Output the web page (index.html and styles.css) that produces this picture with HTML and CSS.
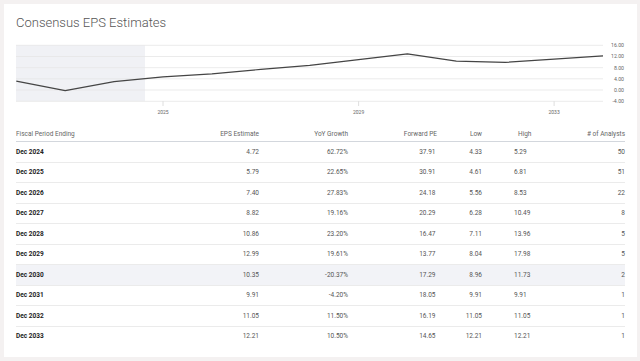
FILE: index.html
```html
<!DOCTYPE html>
<html>
<head>
<meta charset="utf-8">
<link rel="stylesheet" href="styles.css">
</head>
<body>
<div class="card">
  <h1 class="title">Consensus EPS Estimates</h1>
  <svg class="chart" width="609" height="80" viewBox="16 40 609 80">
    <rect x="16" y="45.3" width="129" height="56" fill="#f0f1f5"/>
    <g stroke="#e6e6e6" stroke-width="0.8">
      <line x1="16" y1="45.3" x2="603" y2="45.3"/>
      <line x1="16" y1="56.5" x2="603" y2="56.5"/>
      <line x1="16" y1="67.7" x2="603" y2="67.7"/>
      <line x1="16" y1="78.8" x2="603" y2="78.8"/>
      <line x1="16" y1="90" x2="603" y2="90"/>
      <line x1="16" y1="101.3" x2="603" y2="101.3"/>
    </g>
    <g stroke="#d6d6d6" stroke-width="0.8">
      <line x1="163" y1="101.3" x2="163" y2="106"/>
      <line x1="358.6" y1="101.3" x2="358.6" y2="106"/>
      <line x1="554.1" y1="101.3" x2="554.1" y2="106"/>
    </g>
    <polyline fill="none" stroke="#454545" stroke-width="1.2" stroke-linejoin="round"
      points="16.3,81.1 65.2,90.7 114.1,81.7 163,76.8 211.9,73.8 260.8,69.4 309.7,65.4 358.6,59.7 407.4,53.8 456.3,61.1 505.2,62.4 554.1,59.2 603,55.9"/>
    <g class="ylab">
      <text x="624" y="47.1">16.00</text>
      <text x="624" y="58.3">12.00</text>
      <text x="624" y="69.5">8.00</text>
      <text x="624" y="80.6">4.00</text>
      <text x="624" y="91.8">0.00</text>
      <text x="624" y="103.1">-4.00</text>
    </g>
    <g class="xlab">
      <text x="163" y="114">2025</text>
      <text x="358.6" y="114">2029</text>
      <text x="554.1" y="114">2033</text>
    </g>
  </svg>
  <table class="est">
    <colgroup>
      <col class="c1"><col class="c2"><col class="c3"><col class="c4"><col class="c5"><col class="c6"><col class="c7">
    </colgroup>
    <thead>
      <tr>
        <th class="l">Fiscal Period Ending</th>
        <th>EPS Estimate</th>
        <th>YoY Growth</th>
        <th class="fpe">Forward PE</th>
        <th>Low</th>
        <th class="hi hih">High</th>
        <th># of Analysts</th>
      </tr>
    </thead>
    <tbody>
      <tr><td class="l">Dec 2024</td><td>4.72</td><td>62.72%</td><td>37.91</td><td>4.33</td><td class="hi">5.29</td><td>50</td></tr>
      <tr><td class="l">Dec 2025</td><td>5.79</td><td>22.65%</td><td>30.91</td><td>4.61</td><td class="hi">6.81</td><td>51</td></tr>
      <tr><td class="l">Dec 2026</td><td>7.40</td><td>27.83%</td><td>24.18</td><td>5.56</td><td class="hi">8.53</td><td>22</td></tr>
      <tr><td class="l">Dec 2027</td><td>8.82</td><td>19.16%</td><td>20.29</td><td>6.28</td><td class="hi">10.49</td><td>8</td></tr>
      <tr><td class="l">Dec 2028</td><td>10.86</td><td>23.20%</td><td>16.47</td><td>7.11</td><td class="hi">13.96</td><td>5</td></tr>
      <tr><td class="l">Dec 2029</td><td>12.99</td><td>19.61%</td><td>13.77</td><td>8.04</td><td class="hi">17.98</td><td>5</td></tr>
      <tr class="hover"><td class="l">Dec 2030</td><td>10.35</td><td>-20.37%</td><td>17.29</td><td>8.96</td><td class="hi">11.73</td><td>2</td></tr>
      <tr><td class="l">Dec 2031</td><td>9.91</td><td>-4.20%</td><td>18.05</td><td>9.91</td><td class="hi">9.91</td><td>1</td></tr>
      <tr><td class="l">Dec 2032</td><td>11.05</td><td>11.50%</td><td>16.19</td><td>11.05</td><td class="hi">11.05</td><td>1</td></tr>
      <tr><td class="l">Dec 2033</td><td>12.21</td><td>10.50%</td><td>14.65</td><td>12.21</td><td class="hi">12.21</td><td>1</td></tr>
    </tbody>
  </table>
</div>
</body>
</html>
```

FILE: styles.css
```css
html, body {
  margin: 0;
  padding: 0;
  background: #f4f1f1;
  font-family: Roboto, "Liberation Sans", sans-serif;
}
.card {
  margin: 4px 3px 4px 4px;
  background: #ffffff;
  padding: 10px 12px 10px 12px;
  height: 333px;
  box-sizing: content-box;
}
.title {
  margin: 0;
  font-size: 13px;
  line-height: 18px;
  font-weight: 300;
  color: #555555;
}
.chart {
  display: block;
  margin-top: 8px;
}
.ylab text {
  font-size: 5.2px;
  fill: #666666;
  text-anchor: end;
  font-family: Roboto, sans-serif;
}
.xlab text {
  font-size: 5px;
  fill: #666666;
  text-anchor: middle;
  font-family: Roboto, sans-serif;
}
.est {
  margin-top: 6px;
  width: 609px;
  border-collapse: collapse;
  table-layout: fixed;
  font-size: 6.5px;
}
.c1 { width: 184px; }
.c2 { width: 59px; }
.c3 { width: 89px; }
.c4 { width: 89px; }
.c5 { width: 45px; }
.c6 { width: 78px; }
.c7 { width: 65px; }
.est th {
  font-weight: 400;
  color: #666666;
  text-align: right;
  padding: 4px 0 3px 0;
  line-height: 8px;
  border-bottom: 1px solid #d3d7dd;
  white-space: nowrap;
}
.est td {
  text-align: right;
  padding: 5.5px 0 6px 0;
  line-height: 8px;
  color: #555555;
  border-bottom: 1px solid #ebebeb;
  white-space: nowrap;
}
.est tbody tr:last-child td {
  border-bottom: none;
}
.est .l {
  text-align: left;
}
.est td.l {
  font-weight: 700;
  color: #222222;
}
.est .hi {
  text-align: left;
  padding-left: 32px;
}
.est th.hih {
  padding-left: 36px;
}
.est th.fpe {
  padding-right: 0;
}
.est td:nth-child(4) {
  padding-right: 1.5px;
}
.hover td {
  background: #f2f3f7;
}
```
